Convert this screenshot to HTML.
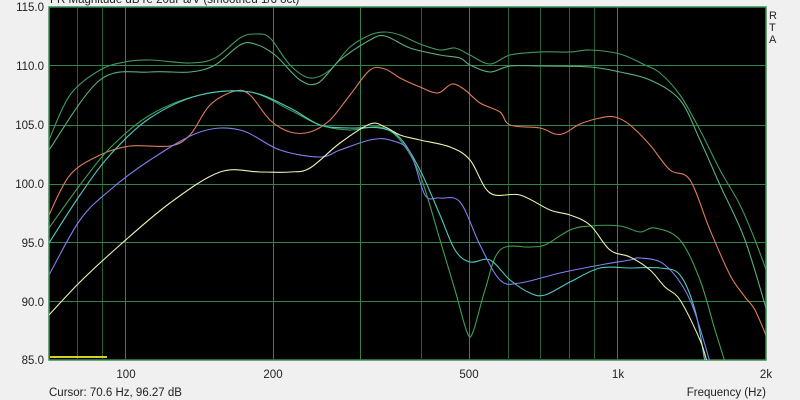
<!DOCTYPE html>
<html><head><style>
html,body{margin:0;padding:0;background:#f0f0f0;width:800px;height:400px;overflow:hidden}
svg{display:block}
text{font-family:"Liberation Sans",sans-serif;font-size:11.5px;fill:#222}
</style></head><body>
<svg width="800" height="400" viewBox="0 0 800 400">
<rect width="800" height="400" fill="#f0f0f0"/>
<text x="50" y="3">FR Magnitude dB re 20uPa/V (smoothed 1/6 oct)</text>
<rect x="49" y="7" width="717" height="353" fill="#000" stroke="#3c8c54" stroke-width="1.5"/>
<defs><clipPath id="c"><rect x="49" y="7" width="717" height="353"/></clipPath></defs>
<g stroke="#245f32" stroke-width="1">
<line x1="77.5" y1="7" x2="77.5" y2="360"/><line x1="102.5" y1="7" x2="102.5" y2="360"/>
<line x1="125.5" y1="7" x2="125.5" y2="360" stroke="#34844a"/>
<line x1="273.5" y1="7" x2="273.5" y2="360" stroke="#34844a"/>
<line x1="360.5" y1="7" x2="360.5" y2="360" stroke="#34844a"/>
<line x1="421.5" y1="7" x2="421.5" y2="360"/>
<line x1="469.5" y1="7" x2="469.5" y2="360" stroke="#34844a"/>
<line x1="508.5" y1="7" x2="508.5" y2="360"/><line x1="540.5" y1="7" x2="540.5" y2="360"/>
<line x1="569.5" y1="7" x2="569.5" y2="360"/><line x1="594.5" y1="7" x2="594.5" y2="360"/>
<line x1="617.5" y1="7" x2="617.5" y2="360" stroke="#34844a"/>
<line x1="49" y1="65.5" x2="766" y2="65.5" stroke="#34844a"/>
<line x1="49" y1="125.5" x2="766" y2="125.5" stroke="#34844a"/>
<line x1="49" y1="184.5" x2="766" y2="184.5" stroke="#34844a"/>
<line x1="49" y1="242.5" x2="766" y2="242.5" stroke="#34844a"/>
<line x1="49" y1="301.5" x2="766" y2="301.5" stroke="#34844a"/>
</g>
<g id="curves" clip-path="url(#c)" fill="none" stroke-width="1.1" stroke-linejoin="round">
<polyline stroke="#3f9a5c" points="49,140 70,95 100,70 125,62 150,60 190,63 215,58 240,38 255,34 270,38 290,65 310,78 330,70 350,47 370,35 385,32 400,35 420,44 440,50 455,48 470,55 490,64 510,55 540,52 570,52 590,50 620,54 645,65 660,73 680,95 700,130 720,170 740,205 755,240 768,275"/>
<polyline stroke="#5ab07a" points="49,150 100,80 150,72 190,72 215,65 240,45 255,44 275,55 300,80 318,83 340,60 370,40 385,36 410,48 440,55 460,58 470,65 490,72 510,66 540,66 590,67 620,72 650,80 680,100 700,140 720,185 745,240 768,315"/>
<polyline stroke="#e07a5a" points="49,215 70,175 100,155 130,146 170,146 190,135 210,105 235,91 250,95 270,120 290,132 310,132 330,120 350,95 370,70 385,69 400,78 420,87 438,93 452,84 465,90 480,103 500,112 510,125 540,128 555,134 565,133 580,124 600,118 615,117 630,125 650,145 670,170 690,180 710,230 730,275 745,297 755,310 768,340"/>
<polyline stroke="#3fa050" points="49,228 80,185 110,148 150,115 200,95 250,92 290,110 320,125 350,130 380,127 400,140 420,175 440,240 455,290 467,332 473,332 485,290 500,250 530,247 545,245 570,230 590,226 620,226 640,232 655,228 680,240 700,280 715,330 725,362"/>
<polyline stroke="#50c8c0" points="49,243 80,195 110,155 150,118 200,95 250,92 290,108 320,125 350,128 380,128 400,138 420,170 440,215 455,250 470,262 490,260 510,280 530,293 545,295 570,282 600,268 630,268 660,268 680,275 695,310 705,362"/>
<polyline stroke="#8080f0" points="49,275 80,220 110,190 150,160 200,132 240,130 280,150 320,157 340,150 370,140 390,140 410,152 425,195 440,198 460,202 480,245 500,280 520,283 560,273 600,265 630,260 640,258 665,265 690,300 710,362"/>
<polyline stroke="#f0f0b0" points="49,315 80,282 120,245 170,203 220,172 260,172 290,172 310,168 340,143 370,124 385,127 400,135 420,140 450,147 470,160 490,193 520,195 550,210 570,215 590,225 610,250 630,257 650,270 665,287 680,300 700,340 707,362"/>
</g>
<line x1="50" y1="357" x2="107" y2="357" stroke="#d8d020" stroke-width="2"/>
<g text-anchor="end">
<text x="44" y="11">115.0</text><text x="44" y="70">110.0</text><text x="44" y="129">105.0</text>
<text x="44" y="188">100.0</text><text x="44" y="247">95.0</text><text x="44" y="306">90.0</text><text x="44" y="364">85.0</text>
</g>
<g text-anchor="middle">
<text x="126" y="378">100</text><text x="273" y="378">200</text><text x="469" y="378">500</text>
<text x="618" y="378">1k</text><text x="766" y="378">2k</text>
</g>
<text x="49" y="396">Cursor: 70.6 Hz, 96.27 dB</text>
<text x="766" y="396" text-anchor="end">Frequency (Hz)</text>
<text x="769" y="19" style="font-size:11px">R</text>
<text x="769" y="31" style="font-size:11px">T</text>
<text x="769" y="43" style="font-size:11px">A</text>
</svg>
<script>
document.querySelectorAll('#curves polyline').forEach(function(pl){
  var p=pl.getAttribute('points').trim().split(/\s+/).map(function(s){return s.split(',').map(Number);});
  var d='M'+p[0][0]+','+p[0][1];
  for(var i=0;i<p.length-1;i++){
    var p0=p[i-1]||p[i],p1=p[i],p2=p[i+1],p3=p[i+2]||p2;
    var c1x=p1[0]+(p2[0]-p0[0])/6,c1y=p1[1]+(p2[1]-p0[1])/6;
    var c2x=p2[0]-(p3[0]-p1[0])/6,c2y=p2[1]-(p3[1]-p1[1])/6;
    d+=' C'+c1x.toFixed(1)+','+c1y.toFixed(1)+' '+c2x.toFixed(1)+','+c2y.toFixed(1)+' '+p2[0]+','+p2[1];
  }
  var path=document.createElementNS('http://www.w3.org/2000/svg','path');
  path.setAttribute('d',d);path.setAttribute('stroke',pl.getAttribute('stroke'));
  pl.parentNode.replaceChild(path,pl);
});
</script>
</body></html>
